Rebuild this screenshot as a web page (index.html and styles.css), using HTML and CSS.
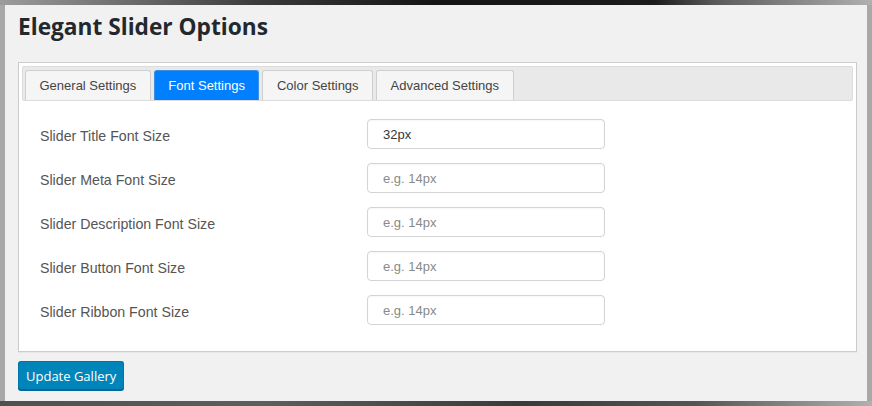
FILE: index.html
```html
<!DOCTYPE html>
<html lang="en">
<head>
<meta charset="utf-8">
<title>Elegant Slider Options</title>
<link rel="stylesheet" href="styles.css">
</head>
<body>
<div class="wrap">
  <h1 class="title">Elegant Slider Options</h1>
  <div class="panel">
    <div class="tabs">
      <span class="tab">General Settings</span>
      <span class="tab active">Font Settings</span>
      <span class="tab">Color Settings</span>
      <span class="tab">Advanced Settings</span>
    </div>
    <div class="form">
      <label class="label">Slider Title Font Size</label>
      <input class="field" type="text" value="32px">
      <label class="label">Slider Meta Font Size</label>
      <input class="field" type="text" placeholder="e.g. 14px">
      <label class="label">Slider Description Font Size</label>
      <input class="field" type="text" placeholder="e.g. 14px">
      <label class="label">Slider Button Font Size</label>
      <input class="field" type="text" placeholder="e.g. 14px">
      <label class="label">Slider Ribbon Font Size</label>
      <input class="field" type="text" placeholder="e.g. 14px">
    </div>
  </div>
  <button class="btn" type="button">Update Gallery</button>
</div>
</body>
</html>
```
FILE: styles.css
```css
html, body {
  margin: 0;
  height: 100%;
}
body {
  box-sizing: border-box;
  padding: 5px;
  background:
    linear-gradient(90deg, #9c9c9c 0%, #3a3a3a 30%, #151515 50%, #1c1c1c 75%, #5a5a5a 82%, #b0b0b0 100%) top left / 100% 5px no-repeat,
    linear-gradient(90deg, #505050 0%, #5e5e5e 30%, #3a3a3a 60%, #555 80%, #b0b0b0 100%) bottom left / 100% 5px no-repeat,
    #a8a8a8;
  font-family: "Liberation Sans", Arial, sans-serif;
}
.wrap {
  height: 100%;
  background: #f1f1f1;
  padding: 1px 10px 0 13px;
  box-sizing: border-box;
}
.title {
  margin: 6px 0 20px;
  font-family: "Open Sans", "Noto Sans", sans-serif;
  font-weight: 700;
  font-size: 22.7px;
  line-height: 30px;
  color: #23282d;
}
.panel {
  background: #fff;
  border: 1px solid #cccccc;
  padding: 3px;
  box-shadow: 0 1px 1px rgba(0,0,0,0.04);
}
.tabs {
  display: flex;
  gap: 3px;
  align-items: flex-end;
  height: 30px;
  padding: 3px 2px 0;
  background: #e9e9e9;
  border: 1px solid #dcdcdc;
  border-radius: 2px;
}
.tab {
  height: 30px;
  box-sizing: border-box;
  padding: 0 13.5px;
  display: flex;
  align-items: center;
  background: #f5f5f5;
  border: 1px solid #cfcfcf;
  border-bottom: none;
  border-radius: 3px 3px 0 0;
  font-size: 13px;
  color: #444;
}
.tab.active {
  background: #0080ff;
  border-color: #3d8fe6;
  color: #fff;
}
.form {
  display: grid;
  grid-template-columns: 327px 238px;
  row-gap: 14px;
  align-items: center;
  padding: 18px 0 23px 18px;
}
.label {
  font-size: 14.2px;
  color: #555;
  padding-top: 3px;
}
.field {
  box-sizing: border-box;
  height: 30px;
  width: 238px;
  margin: 0;
  padding: 0 15px;
  border: 1px solid #d4d4d4;
  border-radius: 4px;
  background: #fff;
  font-family: "Liberation Sans", Arial, sans-serif;
  font-size: 13px;
  color: #32373c;
  box-shadow: inset 0 1px 2px rgba(0,0,0,0.04);
  outline: none;
}
.field::placeholder {
  color: #8a8a8a;
}
.btn {
  margin-top: 9px;
  height: 29px;
  padding: 0 7px;
  background: #0085ba;
  border: 1px solid #0073aa;
  border-bottom-color: #006799;
  border-radius: 3px;
  box-shadow: 0 1px 0 #006799;
  color: #fff;
  font-family: "Open Sans", "Noto Sans", sans-serif;
  font-size: 13px;
  cursor: pointer;
}
```
